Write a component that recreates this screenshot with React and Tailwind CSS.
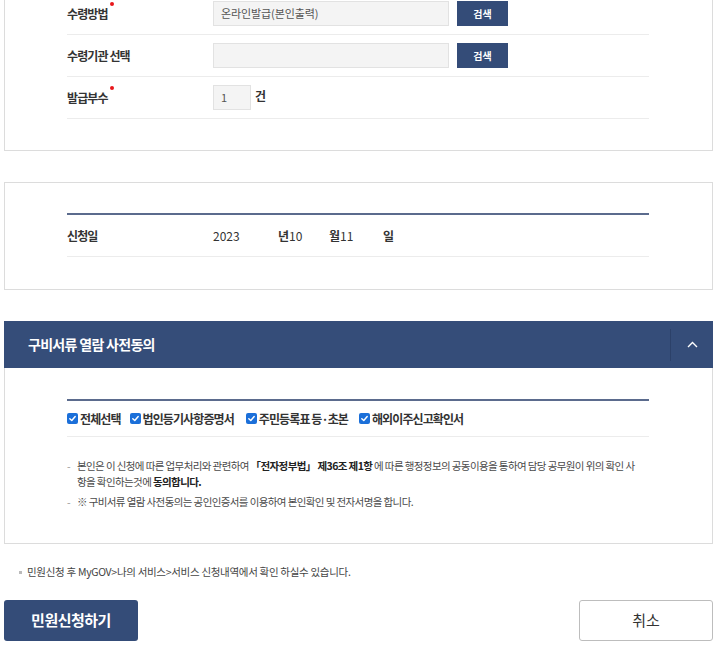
import React from "react";

const FONT = { fontFamily: '"Noto Sans CJK KR", "Noto Sans", sans-serif' };

function Dot() {
  return <span className="absolute -top-[3px] -right-[6px] w-[4px] h-[4px] rounded-full bg-[#e8161b]" />;
}

function Check() {
  return (
    <span className="inline-flex items-center justify-center w-[11px] h-[11px] rounded-[2px] bg-[#1b6fd9] mr-[2px] shrink-0">
      <svg width="9" height="9" viewBox="0 0 10 10">
        <polyline points="2,5.2 4.2,7.3 8,2.8" fill="none" stroke="white" strokeWidth="1.6" strokeLinecap="round" strokeLinejoin="round" />
      </svg>
    </span>
  );
}

export default function App() {
  return (
    <div className="w-[720px] h-[655px] overflow-hidden bg-white text-[#333]" style={FONT}>
      {/* Panel 1 */}
      <div className="-mt-[7px] ml-[4px] w-[709px] border border-t-0 border-[#dcdcdc] pl-[62px] pb-[31px]">
        <div className="w-[582px]">
          <div className="flex items-center h-[42px] border-b border-[#ececec]">
            <div className="w-[146px] text-[12px] font-bold tracking-[-0.9px]">
              <span className="relative">수령방법<Dot /></span>
            </div>
            <div className="w-[236px] h-[25px] bg-[#f4f4f4] border border-[#e2e2e2] flex items-center pl-[7px] text-[11px] text-[#555] tracking-[-0.1px]">
              온라인발급(본인출력)
            </div>
            <button className="ml-[8px] w-[51px] h-[25px] bg-[#344c78] text-white text-[10px] font-bold flex items-center justify-center">검색</button>
          </div>
          <div className="flex items-center h-[42px] border-b border-[#ececec]">
            <div className="w-[146px] text-[12px] font-bold tracking-[-0.9px]">수령기관 선택</div>
            <div className="w-[236px] h-[25px] bg-[#f4f4f4] border border-[#e2e2e2]" />
            <button className="ml-[8px] w-[51px] h-[25px] bg-[#344c78] text-white text-[10px] font-bold flex items-center justify-center">검색</button>
          </div>
          <div className="flex items-center h-[42px] border-b border-[#ececec]">
            <div className="w-[146px] text-[12px] font-bold tracking-[-0.9px]">
              <span className="relative">발급부수<Dot /></span>
            </div>
            <div className="w-[38px] h-[25px] bg-[#f4f4f4] border border-[#e2e2e2] flex items-center pl-[7px] text-[11px] text-[#555]">1</div>
            <span className="ml-[4px] -mt-[3px] text-[12px] font-bold">건</span>
          </div>
        </div>
      </div>

      {/* Panel 2 */}
      <div className="mt-[31px] ml-[4px] w-[709px] border border-[#dcdcdc] pl-[62px] pt-[30px] pb-[32px]">
        <div className="w-[582px] border-t-2 border-[#5b6b8d]">
          <div className="flex items-center h-[42px] border-b border-[#ececec] text-[12px]">
            <div className="w-[146px] font-bold tracking-[-0.9px]">신청일</div>
            <span className="w-[65px] text-[#333]">2023</span>
            <span className="font-bold">년</span>
            <span className="w-[40px]">10</span>
            <span className="font-bold">월</span>
            <span className="w-[43px]">11</span>
            <span className="font-bold">일</span>
          </div>
        </div>
      </div>

      {/* Panel 3 */}
      <div className="mt-[31px] ml-[4px] w-[709px]">
        <div className="h-[47px] bg-[#354d79] flex items-center">
          <div className="flex-1 pl-[24px] text-white text-[14px] font-bold tracking-[-0.7px]">구비서류 열람 사전동의</div>
          <div className="w-px h-[32px] bg-[#2c4169]" />
          <div className="w-[42px] flex items-center justify-center">
            <svg width="11" height="7" viewBox="0 0 11 7">
              <polyline points="1,6 5.5,1.5 10,6" fill="none" stroke="white" strokeWidth="1.4" />
            </svg>
          </div>
        </div>
        <div className="border border-t-0 border-[#dcdcdc] pl-[62px] pt-[31px] pb-[33px]">
          <div className="w-[582px] border-t-2 border-[#5b6b8d]">
            <div className="flex items-center h-[36px] border-b border-[#ececec] text-[12px] font-bold tracking-[-0.9px]">
              <label className="flex items-center"><Check />전체선택</label>
              <label className="flex items-center ml-[9px]"><Check />법인등기사항증명서</label>
              <label className="flex items-center ml-[12px]"><Check />주민등록표 등·초본</label>
              <label className="flex items-center ml-[11px]"><Check />해외이주신고확인서</label>
            </div>
            <ul className="mt-[21px] text-[10.5px] leading-[16px] text-[#4a4a4a] tracking-[-0.6px]">
              <li className="flex">
                <span className="w-[10px] shrink-0 text-[#999]">-</span>
                <span className="whitespace-nowrap">
                  본인은 이 신청에 따른 업무처리와 관련하여 <b className="text-[#222]">「전자정부법」 제36조 제1항</b> 에 따른 행정정보의 공동이용을 통하여 담당 공무원이 위의 확인 사
                  <br />
                  항을 확인하는것에 <b className="text-[#222]">동의합니다.</b>
                </span>
              </li>
              <li className="flex mt-[4px]">
                <span className="w-[10px] shrink-0 text-[#999]">-</span>
                <span className="whitespace-nowrap">※ 구비서류 열람 사전동의는 공인인증서를 이용하여 본인확인 및 전자서명을 합니다.</span>
              </li>
            </ul>
          </div>
        </div>
      </div>

      {/* Note */}
      <div className="mt-[20px] pl-[19px] flex items-center h-[16px] text-[10.5px] text-[#444] tracking-[-0.3px]">
        <span className="w-[3px] h-[3px] bg-[#bbb] mr-[5px]" />
        민원신청 후 MyGOV&gt;나의 서비스&gt;서비스 신청내역에서 확인 하실수 있습니다.
      </div>

      {/* Buttons */}
      <div className="mt-[20px] ml-[4px] w-[709px] flex justify-between">
        <button className="w-[134px] h-[41px] rounded-[3px] bg-[#344c78] text-white text-[15px] font-bold tracking-[-0.5px]">민원신청하기</button>
        <button className="w-[134px] h-[41px] rounded-[3px] border border-[#bdbdbd] bg-white text-[#333] text-[15px]">취소</button>
      </div>
    </div>
  );
}
